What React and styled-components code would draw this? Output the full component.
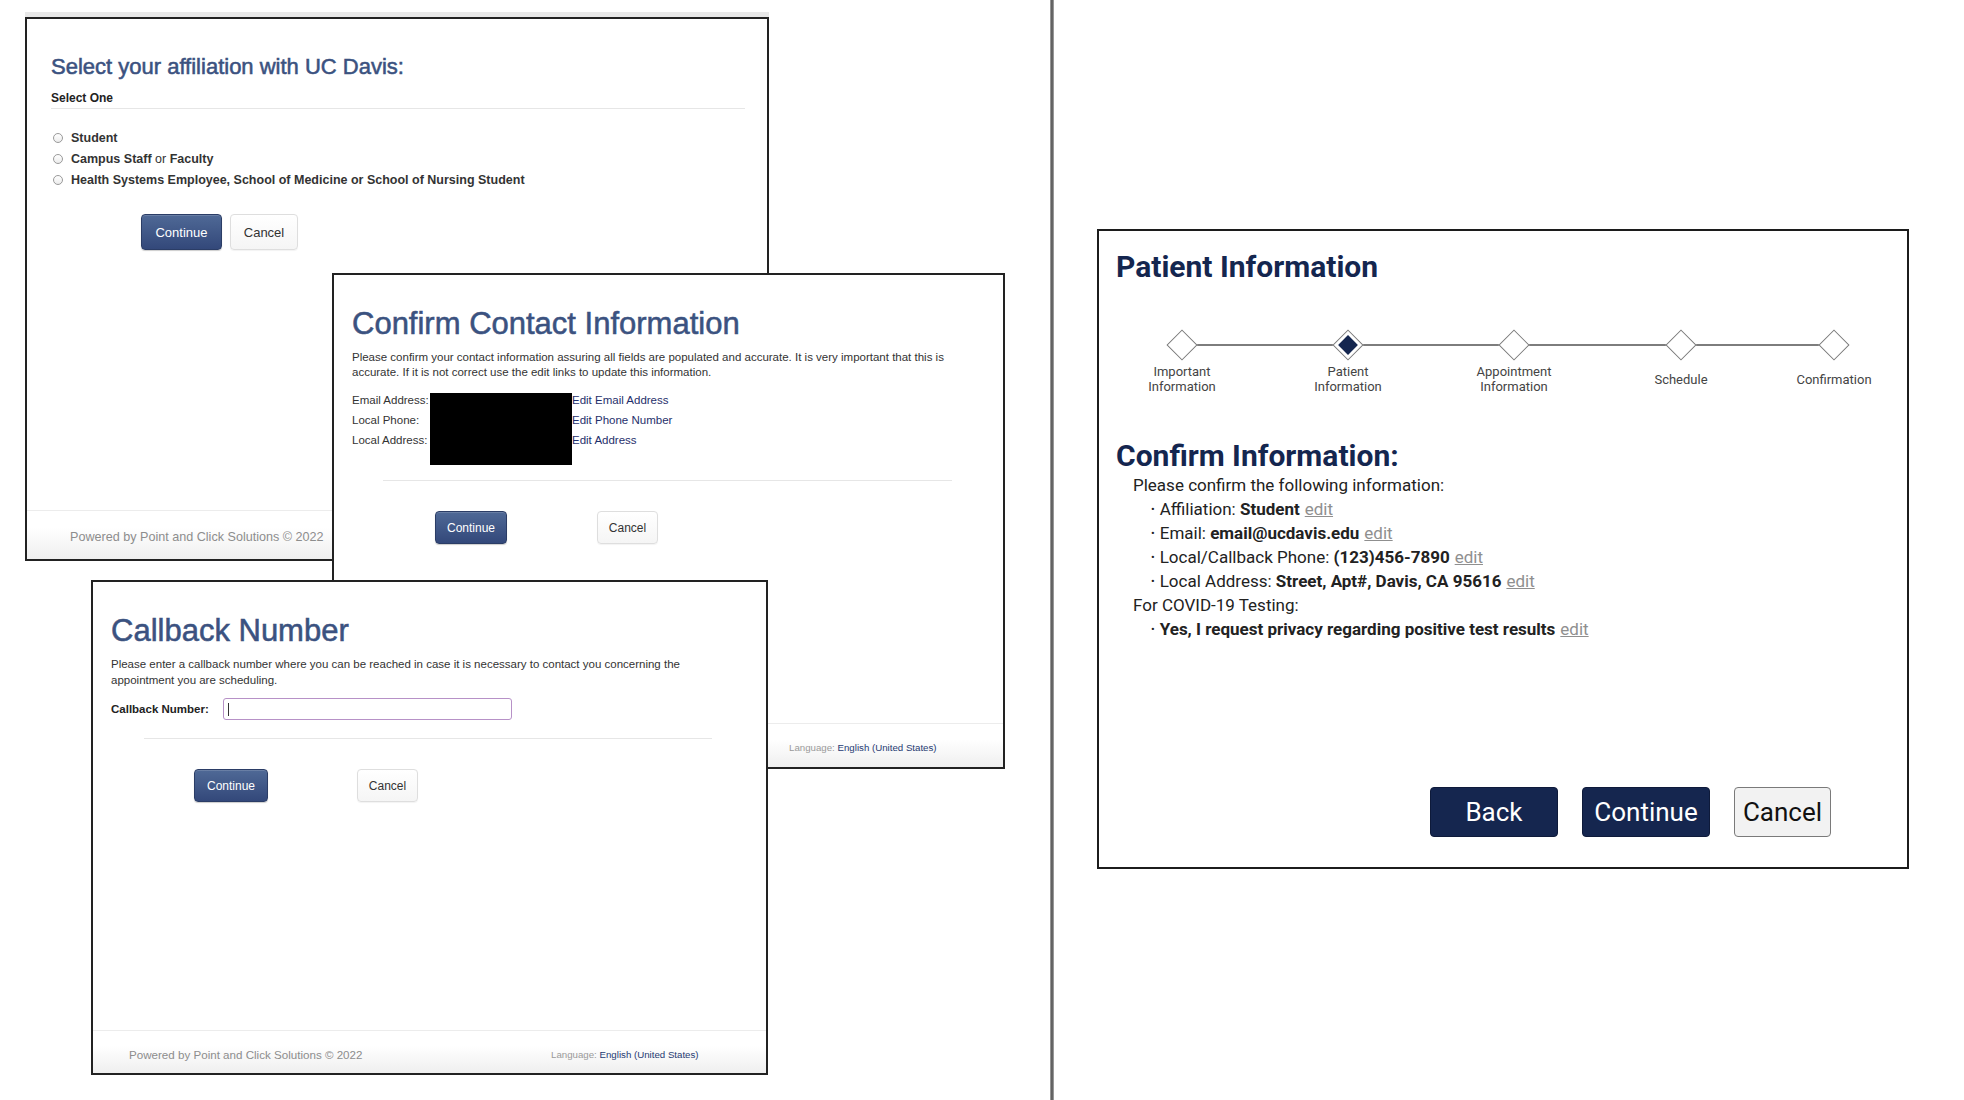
import React from 'react';
import styled, { createGlobalStyle, css } from 'styled-components';

const GlobalStyle = createGlobalStyle`
  html, body {
    margin: 0;
    padding: 0;
    background: #fff;
  }
  body {
    font-family: "Liberation Sans", Arial, sans-serif;
  }
`;

const Canvas = styled.div`
  display: flex;
  width: 1964px;
  height: 1100px;
  overflow: hidden;
  background: #fff;
`;

const Desk = styled.div`
  position: relative;
  flex: none;
  width: 1050px;
`;

const Divider = styled.div`
  flex: none;
  width: 4px;
  background: linear-gradient(to right, #b0b0b0, #5c5c5c 40%, #6a6a6a 70%, #b8b8b8);
`;

const RightSide = styled.div`
  flex: 1;
  padding: 229px 0 0 43px;
`;

/* ---------- old scheduling windows (stacked screenshots) ---------- */

const Window = styled.section`
  position: absolute;
  left: ${p => p.$x}px;
  top: ${p => p.$y}px;
  width: ${p => p.$w}px;
  height: ${p => p.$h}px;
  z-index: ${p => p.$z};
  box-sizing: border-box;
  display: flex;
  flex-direction: column;
  background: #fff;
  border: 2px solid #222;
  box-shadow: ${p => (p.$shade ? '0 -5px 0 #e8e8e8' : 'none')};
  color: #333;
  font-family: "Liberation Sans", Arial, sans-serif;
`;

const WindowBody = styled.div`
  flex: 1;
  display: flex;
  flex-direction: column;
  align-items: flex-start;
  padding: ${p => p.$top}px ${p => p.$right}px 0 ${p => p.$left}px;
`;

const PageTitle = styled.h1`
  margin: 0;
  font-size: ${p => p.$size}px;
  line-height: ${p => p.$lh}px;
  font-weight: 400;
  color: #3b5280;
  -webkit-text-stroke: 0.55px #3b5280;
  white-space: nowrap;
`;

const GroupLabel = styled.div`
  margin-top: 10px;
  font-size: 12px;
  line-height: 16px;
  font-weight: 700;
  color: #222;
`;

const Rule = styled.div`
  align-self: stretch;
  height: 1px;
  background: #e6e6e6;
  margin: ${p => p.$mt}px ${p => p.$mr || 0}px 0 ${p => p.$ml || 0}px;
`;

const RadioList = styled.div`
  display: flex;
  flex-direction: column;
  margin-top: 18px;
  padding-left: 2px;
`;

const RadioRow = styled.label`
  display: flex;
  align-items: center;
  gap: 8px;
  height: 21px;
  font-size: 12.5px;
  font-weight: 700;
  color: #333;
  white-space: nowrap;
`;

const RadioDot = styled.span`
  flex: none;
  width: 10px;
  height: 10px;
  box-sizing: border-box;
  border-radius: 50%;
  border: 1px solid #9a9a9a;
  background: linear-gradient(#fff, #ececec);
`;

const Plain = styled.span`
  font-weight: 400;
`;

const Paragraph = styled.p`
  margin: ${p => p.$mt}px 0 0;
  font-size: ${p => p.$fs}px;
  line-height: ${p => p.$lh}px;
  color: #333;
  white-space: nowrap;
`;

const ContactGrid = styled.div`
  display: grid;
  grid-template-columns: 78px 142px auto;
  grid-template-rows: repeat(3, 20px);
  margin-top: 10px;
  padding-bottom: 14px;
  font-size: 11.5px;
  line-height: 20px;
  color: #333;
`;

const Redacted = styled.div`
  grid-column: 2;
  grid-row: 1 / span 3;
  height: 72px;
  margin-top: 3px;
  background: #000;
`;

const EditLink = styled.a`
  grid-column: 3;
  color: #1f2f6b;
  text-decoration: none;
  white-space: nowrap;
`;

const CallbackRow = styled.div`
  display: flex;
  align-items: center;
  gap: 14px;
  margin-top: 10px;
`;

const FieldLabel = styled.span`
  font-size: 11.5px;
  font-weight: 700;
  color: #222;
`;

const InputBox = styled.div`
  display: flex;
  align-items: center;
  width: 289px;
  height: 22px;
  box-sizing: border-box;
  border: 1px solid #b791c7;
  border-radius: 3px;
  background: #fff;
`;

const Caret = styled.span`
  width: 1px;
  height: 13px;
  margin-left: 4px;
  background: #333;
`;

const ButtonRow = styled.div`
  display: flex;
  gap: ${p => p.$gap}px;
  margin: ${p => p.$mt}px 0 0 ${p => p.$ml}px;
`;

const FormButton = styled.button`
  box-sizing: border-box;
  width: ${p => p.$w}px;
  height: ${p => p.$h}px;
  padding: 0;
  border-radius: 4px;
  font-family: inherit;
  font-size: ${p => p.$fs}px;
  cursor: pointer;
  ${p =>
    p.$primary
      ? css`
          color: #fff;
          border: 1px solid #2b3d66;
          background: linear-gradient(#4f6996, #33487a);
          box-shadow: inset 0 1px 0 rgba(255, 255, 255, 0.15), 0 1px 1px rgba(0, 0, 0, 0.2);
        `
      : css`
          color: #333;
          border: 1px solid #dedede;
          background: linear-gradient(#fff, #f5f5f5);
          box-shadow: 0 1px 1px rgba(0, 0, 0, 0.05);
        `}
`;

const WindowFooter = styled.footer`
  flex: none;
  height: ${p => p.$h}px;
  box-sizing: border-box;
  display: grid;
  grid-template-columns: ${p => p.$split}px auto;
  align-items: center;
  padding: 4px 0 0 ${p => p.$left}px;
  border-top: 1px solid #ececec;
  background: linear-gradient(#fff 35%, #efefef);
`;

const PoweredBy = styled.span`
  font-size: ${p => p.$fs}px;
  color: #8d8d8d;
  white-space: nowrap;
`;

const Language = styled.span`
  font-size: 9.7px;
  color: #9a9a9a;
  white-space: nowrap;

  a {
    color: #263a72;
    text-decoration: none;
  }
`;

/* ---------- new patient information mockup ---------- */

const Panel = styled.section`
  width: 812px;
  height: 640px;
  box-sizing: border-box;
  display: flex;
  flex-direction: column;
  align-items: flex-start;
  padding: 18px 76px 30px 17px;
  border: 2px solid #1c1c1c;
  background: #fff;
  color: #1e1e1e;
  font-family: Roboto, "Noto Sans", sans-serif;
`;

const PanelTitle = styled.h2`
  margin: ${p => p.$mt || 0}px 0 0;
  font-size: 30px;
  line-height: ${p => p.$lh}px;
  font-weight: 700;
  color: #14264f;
`;

const Stepper = styled.ol`
  position: relative;
  display: flex;
  margin: 44px 0 0 6px;
  padding: 0;
  list-style: none;

  &::before {
    content: '';
    position: absolute;
    left: 60px;
    right: 60px;
    top: 15px;
    height: 1.5px;
    background: #7d7d7d;
  }
`;

const Step = styled.li`
  display: flex;
  flex-direction: column;
  align-items: center;
  width: 120px;
  margin-left: ${p => p.$offset}px;
`;

const DiamondSlot = styled.div`
  display: flex;
  align-items: center;
  justify-content: center;
  width: 30px;
  height: 31px;
`;

const Diamond = styled.span`
  position: relative;
  z-index: 1;
  width: 22px;
  height: 22px;
  box-sizing: border-box;
  border: 1.5px solid #7a7a7a;
  background: #fff;
  transform: rotate(45deg);

  ${p =>
    p.$active &&
    css`
      &::after {
        content: '';
        position: absolute;
        inset: 3px;
        background: #14264f;
      }
    `}
`;

const StepLabel = styled.span`
  display: flex;
  align-items: center;
  height: 30px;
  margin-top: 4px;
  font-size: 13px;
  line-height: 15px;
  text-align: center;
  color: #444;
`;

const Intro = styled.p`
  margin: 0 0 0 17px;
  font-size: 17px;
  line-height: 24px;
  color: #222;
`;

const Bullets = styled.ul`
  margin: 0;
  padding: 0 0 0 35px;
  list-style: none;
`;

const Bullet = styled.li`
  height: 24px;
  font-size: 17px;
  line-height: 24px;
  color: #222;
  white-space: nowrap;
  font-weight: ${p => (p.$strong ? 700 : 400)};

  &::before {
    content: '•';
    margin-right: 5px;
    font-size: 11px;
    font-weight: 400;
    line-height: 0;
    vertical-align: 2px;
  }

  b {
    font-weight: 700;
  }
`;

const SoftEdit = styled.a`
  margin-left: 5px;
  font-weight: 400;
  color: #8f8f8f;
  text-decoration: underline;
`;

const ActionBar = styled.div`
  display: flex;
  align-self: flex-end;
  gap: 24px;
  margin-top: auto;
`;

const ActionButton = styled.button`
  box-sizing: border-box;
  width: ${p => p.$w}px;
  height: 50px;
  padding: 0;
  border-radius: 4px;
  font-family: Roboto, "Noto Sans", sans-serif;
  font-size: 26px;
  cursor: pointer;
  ${p =>
    p.$primary
      ? css`
          color: #fff;
          background: #15264f;
          border: 1px solid #0e1a3a;
        `
      : css`
          color: #111;
          background: #f2f2f2;
          border: 1px solid #7a7a7a;
        `}
`;

const steps = [
  { label: ['Important', 'Information'], offset: 0 },
  { label: ['Patient', 'Information'], offset: 46, active: true },
  { label: ['Appointment', 'Information'], offset: 46 },
  { label: ['Schedule'], offset: 47 },
  { label: ['Confirmation'], offset: 33 },
];

const Footer = ({ h, left, split, fs }) => (
  <WindowFooter $h={h} $left={left} $split={split}>
    <PoweredBy $fs={fs}>Powered by Point and Click Solutions © 2022</PoweredBy>
    <Language>
      Language: <a>English (United States)</a>
    </Language>
  </WindowFooter>
);

const AffiliationWindow = () => (
  <Window $x={25} $y={17} $w={744} $h={544} $z={1} $shade>
    <WindowBody $top={35} $left={24} $right={22}>
      <PageTitle $size={22} $lh={26}>Select your affiliation with UC Davis:</PageTitle>
      <GroupLabel>Select One</GroupLabel>
      <Rule $mt={2} />
      <RadioList>
        <RadioRow><RadioDot /><span>Student</span></RadioRow>
        <RadioRow><RadioDot /><span>Campus Staff <Plain>or</Plain> Faculty</span></RadioRow>
        <RadioRow><RadioDot /><span>Health Systems Employee, School of Medicine or School of Nursing Student</span></RadioRow>
      </RadioList>
      <ButtonRow $mt={24} $ml={90} $gap={8}>
        <FormButton $primary $w={81} $h={36} $fs={13}>Continue</FormButton>
        <FormButton $w={68} $h={36} $fs={13}>Cancel</FormButton>
      </ButtonRow>
    </WindowBody>
    <Footer h={49} left={43} split={415} fs={12.6} />
  </Window>
);

const ContactWindow = () => (
  <Window $x={332} $y={273} $w={673} $h={496} $z={2}>
    <WindowBody $top={31} $left={18} $right={18}>
      <PageTitle $size={31} $lh={36}>Confirm Contact Information</PageTitle>
      <Paragraph $mt={8} $fs={11.5} $lh={15}>
        Please confirm your contact information assuring all fields are populated and accurate. It is very important that this is
        <br />
        accurate. If it is not correct use the edit links to update this information.
      </Paragraph>
      <ContactGrid>
        <span>Email Address:</span>
        <Redacted />
        <EditLink>Edit Email Address</EditLink>
        <span>Local Phone:</span>
        <EditLink>Edit Phone Number</EditLink>
        <span>Local Address:</span>
        <EditLink>Edit Address</EditLink>
      </ContactGrid>
      <Rule $mt={16} $ml={31} $mr={33} />
      <ButtonRow $mt={30} $ml={83} $gap={90}>
        <FormButton $primary $w={72} $h={33} $fs={12}>Continue</FormButton>
        <FormButton $w={61} $h={33} $fs={12}>Cancel</FormButton>
      </ButtonRow>
    </WindowBody>
    <Footer h={44} left={36} split={419} fs={11.6} />
  </Window>
);

const CallbackWindow = () => (
  <Window $x={91} $y={580} $w={677} $h={495} $z={3}>
    <WindowBody $top={31} $left={18} $right={18}>
      <PageTitle $size={31} $lh={36}>Callback Number</PageTitle>
      <Paragraph $mt={7} $fs={11.5} $lh={16}>
        Please enter a callback number where you can be reached in case it is necessary to contact you concerning the
        <br />
        appointment you are scheduling.
      </Paragraph>
      <CallbackRow>
        <FieldLabel>Callback Number:</FieldLabel>
        <InputBox>
          <Caret />
        </InputBox>
      </CallbackRow>
      <Rule $mt={18} $ml={33} $mr={36} />
      <ButtonRow $mt={30} $ml={83} $gap={89}>
        <FormButton $primary $w={74} $h={33} $fs={12}>Continue</FormButton>
        <FormButton $w={61} $h={33} $fs={12}>Cancel</FormButton>
      </ButtonRow>
    </WindowBody>
    <Footer h={43} left={36} split={422} fs={11.6} />
  </Window>
);

const PatientPanel = () => (
  <Panel>
    <PanelTitle $lh={36}>Patient Information</PanelTitle>
    <Stepper>
      {steps.map(s => (
        <Step key={s.label.join(' ')} $offset={s.offset}>
          <DiamondSlot>
            <Diamond $active={s.active} />
          </DiamondSlot>
          <StepLabel>
            {s.label[0]}
            {s.label[1] && <br />}
            {s.label[1]}
          </StepLabel>
        </Step>
      ))}
    </Stepper>
    <PanelTitle $mt={45} $lh={34}>Confirm Information:</PanelTitle>
    <Intro>Please confirm the following information:</Intro>
    <Bullets>
      <Bullet>Affiliation: <b>Student</b><SoftEdit>edit</SoftEdit></Bullet>
      <Bullet>Email: <b>email@ucdavis.edu</b><SoftEdit>edit</SoftEdit></Bullet>
      <Bullet>Local/Callback Phone: <b>(123)456-7890</b><SoftEdit>edit</SoftEdit></Bullet>
      <Bullet>Local Address: <b>Street, Apt#, Davis, CA 95616</b><SoftEdit>edit</SoftEdit></Bullet>
    </Bullets>
    <Intro>For COVID-19 Testing:</Intro>
    <Bullets>
      <Bullet $strong>Yes, I request privacy regarding positive test results<SoftEdit>edit</SoftEdit></Bullet>
    </Bullets>
    <ActionBar>
      <ActionButton $primary $w={128}>Back</ActionButton>
      <ActionButton $primary $w={128}>Continue</ActionButton>
      <ActionButton $w={97}>Cancel</ActionButton>
    </ActionBar>
  </Panel>
);

export default function App() {
  return (
    <>
      <GlobalStyle />
      <Canvas>
        <Desk>
          <AffiliationWindow />
          <ContactWindow />
          <CallbackWindow />
        </Desk>
        <Divider />
        <RightSide>
          <PatientPanel />
        </RightSide>
      </Canvas>
    </>
  );
}
